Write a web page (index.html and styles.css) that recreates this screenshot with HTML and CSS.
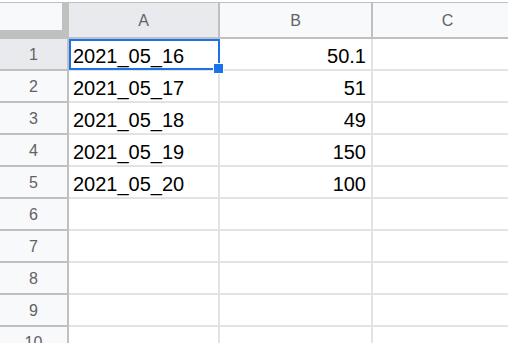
FILE: index.html
```html
<!DOCTYPE html>
<html lang="en">
<head>
<meta charset="UTF-8">
<meta name="viewport" content="width=device-width, initial-scale=1.0">
<title>Sheet</title>
<link rel="stylesheet" href="styles.css">
</head>
<body>
<div class="sheet">
  <!-- column headers -->
  <div class="corner"><div class="corner-fill"></div></div>
  <div class="col-head selected">A</div>
  <div class="col-head">B</div>
  <div class="col-head">C</div>

  <div class="row-head selected">1</div>
  <div class="cell active">2021_05_16<span class="handle"></span></div>
  <div class="cell num">50.1</div>
  <div class="cell"></div>

  <div class="row-head">2</div>
  <div class="cell">2021_05_17</div>
  <div class="cell num">51</div>
  <div class="cell"></div>

  <div class="row-head">3</div>
  <div class="cell">2021_05_18</div>
  <div class="cell num">49</div>
  <div class="cell"></div>

  <div class="row-head">4</div>
  <div class="cell">2021_05_19</div>
  <div class="cell num">150</div>
  <div class="cell"></div>

  <div class="row-head">5</div>
  <div class="cell">2021_05_20</div>
  <div class="cell num">100</div>
  <div class="cell"></div>

  <div class="row-head">6</div>
  <div class="cell"></div>
  <div class="cell"></div>
  <div class="cell"></div>

  <div class="row-head">7</div>
  <div class="cell"></div>
  <div class="cell"></div>
  <div class="cell"></div>

  <div class="row-head">8</div>
  <div class="cell"></div>
  <div class="cell"></div>
  <div class="cell"></div>

  <div class="row-head">9</div>
  <div class="cell"></div>
  <div class="cell"></div>
  <div class="cell"></div>

  <div class="row-head">10</div>
  <div class="cell"></div>
  <div class="cell"></div>
  <div class="cell"></div>
</div>
</body>
</html>
```

FILE: styles.css
```css
html, body {
  margin: 0;
  padding: 0;
  background-color: white;
  overflow: hidden;
  height: 343px;
}
body {
  padding-top: 2px;
  font-family: 'Liberation Sans', Arial, sans-serif;
}
.sheet {
  display: grid;
  grid-template-columns: 69px 151px 153px 151px;
  grid-template-rows: 36px;
  grid-auto-rows: 32px;
  border-top: 1px solid #c0c0c0;
  width: max-content;
}
.sheet > div {
  box-sizing: border-box;
}
.corner {
  background-color: #c0c0c0;
}
.corner-fill {
  width: 62px;
  height: 27px;
  background-color: #f8f9fa;
}
.col-head {
  display: flex;
  justify-content: center;
  align-items: center;
  padding-top: 2px;
  background-color: #f8f9fa;
  border-right: 2px solid #c0c0c0;
  border-bottom: 2px solid #c0c0c0;
  color: #5f6368;
  font-size: 16px;
}
.row-head {
  display: flex;
  justify-content: center;
  align-items: center;
  padding-top: 2px;
  background-color: #f8f9fa;
  border-right: 2px solid #c0c0c0;
  border-bottom: 2px solid #c0c0c0;
  color: #5f6368;
  font-size: 16px;
}
.selected {
  background-color: #e8eaed;
}
.cell {
  display: flex;
  align-items: flex-end;
  padding: 0 5px 1px 4px;
  border-right: 2px solid #e2e3e3;
  border-bottom: 2px solid #e2e3e3;
  color: #000;
  font-size: 20px;
  line-height: 23px;
  white-space: nowrap;
}
.cell.num {
  justify-content: flex-end;
}
/* selection box on A1 */
.cell.active {
  position: relative;
}
.cell.active::after {
  content: '';
  position: absolute;
  left: 0;
  top: 0;
  width: 151px;
  height: 31px;
  box-sizing: border-box;
  border: 2px solid #1a73e8;
}
.handle {
  position: absolute;
  left: 144px;
  top: 24px;
  width: 11px;
  height: 11px;
  box-sizing: border-box;
  background-color: #1a73e8;
  border: 1px solid white;
  z-index: 1;
}
```
